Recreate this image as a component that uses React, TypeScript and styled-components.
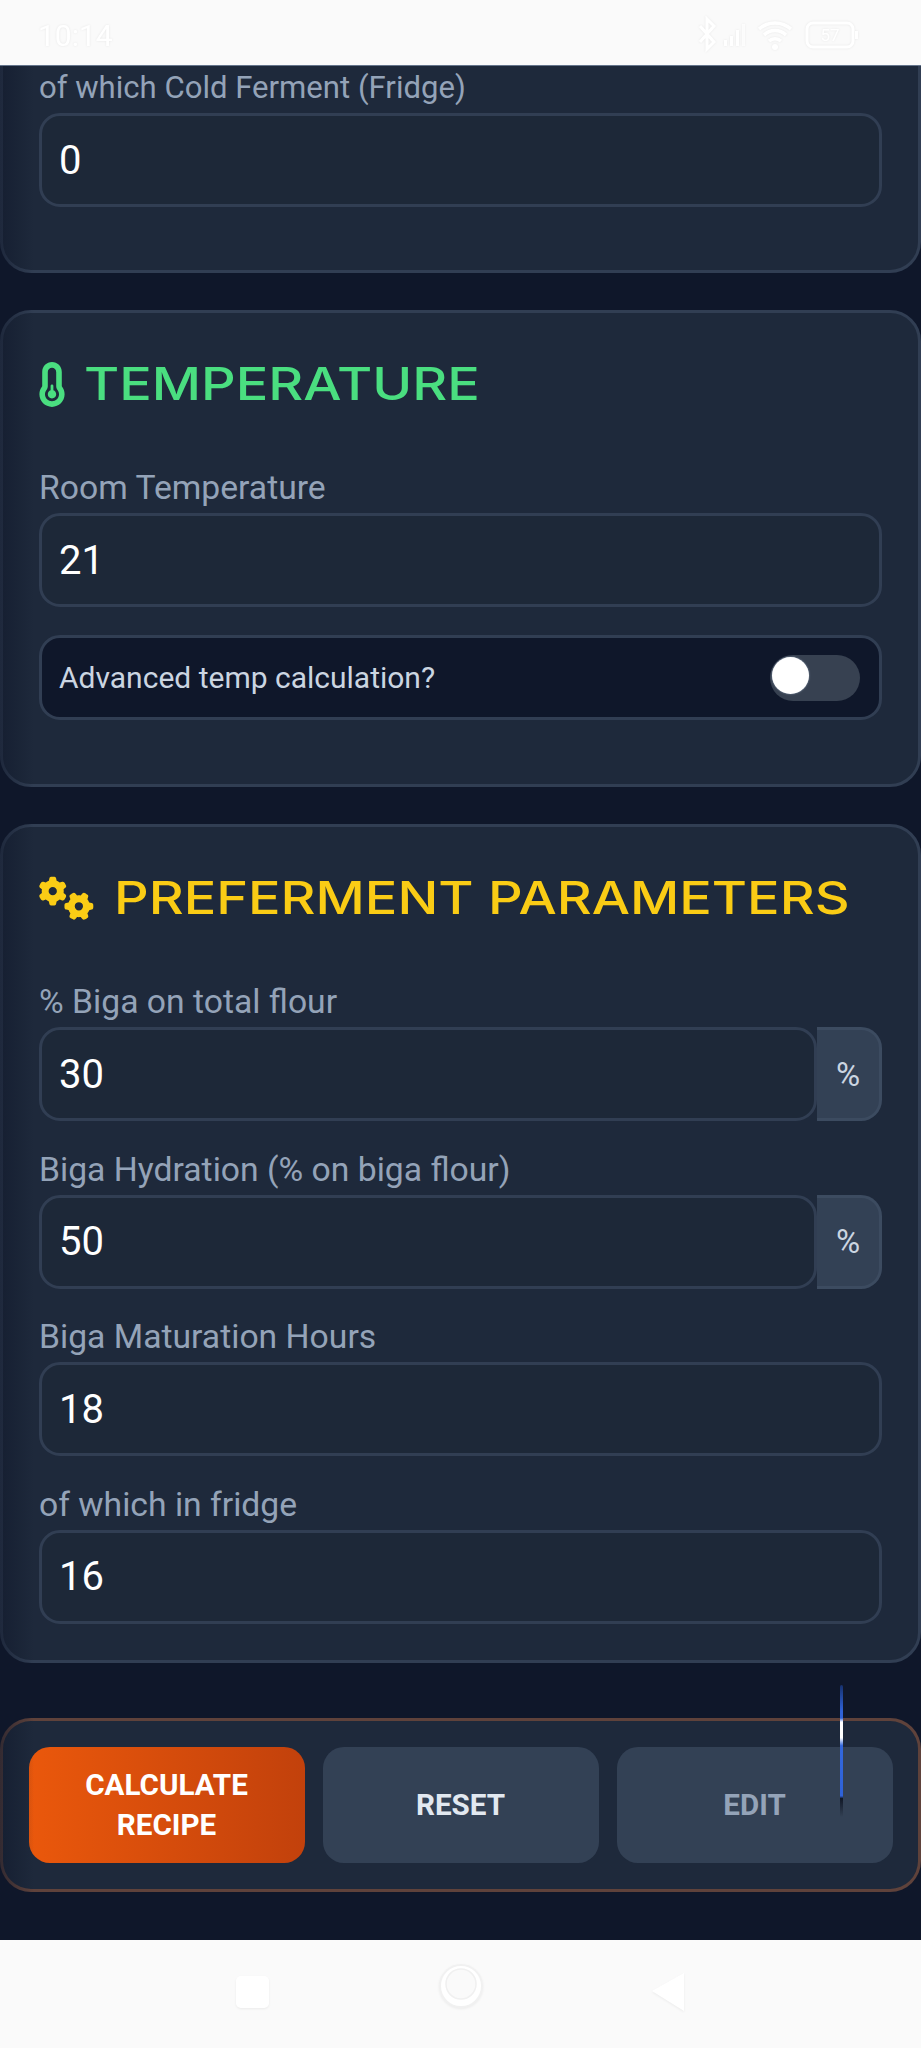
import React from "react";
import styled, { createGlobalStyle } from "styled-components";
import { FaGears, FaTemperatureQuarter } from "react-icons/fa6";

const Global = createGlobalStyle`
  html, body { margin: 0; padding: 0; background: #0f172a; }
  * { box-sizing: border-box; }
`;

const Screen = styled.div`
  position: relative;
  width: 921px;
  height: 2048px;
  overflow: hidden;
  display: flex;
  flex-direction: column;
  background: #0f172a;
  font-family: Roboto, "Liberation Sans", sans-serif;
`;

const StatusBar = styled.header`
  height: 66px;
  flex: none;
  background: #fafafa;
  border-bottom: 1px solid #64748b;
  display: flex;
  align-items: center;
  justify-content: space-between;
  padding: 6px 40px 0 38px;
  color: #ffffff;
`;

const Time = styled.span`
  font-size: 30px;
  line-height: 32px;
  filter: drop-shadow(0 0 1px rgba(0, 0, 0, 0.08));
`;

const StatusIcons = styled.svg`
  width: 184px;
  height: 40px;
  filter: drop-shadow(0 0 1px rgba(0, 0, 0, 0.08));
`;

const Main = styled.main`
  position: relative;
  flex: 1;
  min-height: 0;
  display: flex;
  flex-direction: column;
  gap: 37px;
`;

const EdgeShade = styled.div`
  position: absolute;
  inset: 0 auto 0 0;
  width: 34px;
  background: linear-gradient(90deg, rgba(15, 23, 42, 0.55), rgba(15, 23, 42, 0));
  pointer-events: none;
`;

const Card = styled.section<{ $clipped?: boolean }>`
  background: #1e293b;
  border: 3px solid #313e53;
  border-top-width: ${(p) => (p.$clipped ? 0 : 3)}px;
  border-radius: ${(p) => (p.$clipped ? "0 0 31px 31px" : "31px")};
  padding: ${(p) => (p.$clipped ? "0 36px 63px" : "36px")};
  display: flex;
  flex-direction: column;
`;

const Heading = styled.h2<{ $color: string }>`
  margin: 0 0 47px;
  height: 70px;
  display: flex;
  align-items: center;
  color: ${(p) => p.$color};
  font-family: Inter, "DejaVu Sans", sans-serif;
  font-weight: 500;
  font-size: 45px;
  line-height: 70px;
  white-space: nowrap;
  & > svg { flex: none; }
`;

const HeadingText = styled.span<{ $gap: number }>`
  display: inline-block;
  margin-left: ${(p) => p.$gap}px;
  transform: scaleX(1.2);
  transform-origin: left center;
`;

const Fields = styled.div`
  display: flex;
  flex-direction: column;
  gap: 26.67px;
`;

const Field = styled.div`
  display: flex;
  flex-direction: column;
`;

const Label = styled.label<{ $small?: boolean }>`
  height: 43px;
  margin-bottom: 4px;
  color: #94a3b8;
  font-size: ${(p) => (p.$small ? 31.1 : 33.7)}px;
  line-height: 43px;
`;

const InputRow = styled.div`
  display: flex;
`;

const Input = styled.input`
  flex: 1;
  min-width: 0;
  height: 94px;
  padding: 0 17px;
  background: #1d2838;
  border: 3px solid #313e53;
  border-radius: 21px;
  color: #ffffff;
  font-family: inherit;
  font-size: 40px;
  outline: none;
`;

const Suffix = styled.span`
  flex: none;
  width: 65px;
  height: 94px;
  display: flex;
  align-items: center;
  justify-content: center;
  background: #334155;
  border: 3px solid #3c4b60;
  border-left: 0;
  border-radius: 0 21px 21px 0;
  color: #cbd5e1;
  font-size: 33px;
`;

const ToggleRow = styled.div`
  margin-top: 28px;
  margin-bottom: 28px;
  height: 85px;
  display: flex;
  align-items: center;
  justify-content: space-between;
  padding: 0 19px 0 17px;
  background: #0f172a;
  border: 3px solid #313e53;
  border-radius: 21px;
  color: #cbd5e1;
  font-size: 30px;
`;

const Track = styled.span`
  position: relative;
  display: block;
  width: 90px;
  height: 46px;
  border-radius: 23px;
  background: #374151;
`;

const Thumb = styled.span`
  position: absolute;
  left: 2px;
  top: 2px;
  width: 37px;
  height: 37px;
  border-radius: 50%;
  background: #ffffff;
  box-shadow: 0 0 2px rgba(148, 163, 184, 0.9);
`;

const ActionBar = styled.section`
  margin-top: 18px;
  height: 174px;
  flex: none;
  display: grid;
  grid-template-columns: repeat(3, 276px);
  gap: 18px;
  align-items: center;
  justify-content: center;
  background: #1e293b;
  border: 3px solid rgba(234, 120, 60, 0.32);
  border-radius: 31px;
`;

const ActionButton = styled.button<{ $variant: "primary" | "plain" | "muted" }>`
  height: 116px;
  border: 0;
  border-radius: 21px;
  padding: 0 40px;
  font-family: inherit;
  font-size: 29.6px;
  line-height: 40px;
  font-weight: 700;
  background: ${(p) =>
    p.$variant === "primary" ? "linear-gradient(90deg, #ea580c, #c2410c)" : "#334155"};
  color: ${(p) =>
    p.$variant === "primary" ? "#ffffff" : p.$variant === "plain" ? "#e2e8f0" : "#94a3b8"};
`;

const Streak = styled.div`
  position: absolute;
  left: 839.5px;
  top: 1685px;
  width: 3px;
  height: 132px;
  border-radius: 2px;
  background: linear-gradient(
    180deg,
    rgba(37, 99, 235, 0.35) 0%,
    #2f62d8 20%,
    #2f62d8 25%,
    #ffffff 28%,
    #ffffff 40%,
    #3367dc 46%,
    #2f62d8 84%,
    #111827 86%,
    rgba(17, 24, 39, 0) 100%
  );
  pointer-events: none;
`;

const NavBar = styled.nav`
  height: 108px;
  flex: none;
  background: #fafafa;
  position: relative;
`;

const NavIcons = styled.svg`
  position: absolute;
  left: 0;
  top: 0;
  width: 921px;
  height: 108px;
  filter: drop-shadow(0 1px 1px rgba(0, 0, 0, 0.06));
`;

function Status() {
  return (
    <StatusBar>
      <Time>10:14</Time>
      <StatusIcons viewBox="0 0 184 40">
        <path d="M3 10l14 16-7 7V3l7 7L3 26" fill="none" stroke="#fff" strokeWidth="3" />
        <g fill="#fff">
          <rect x="27" y="24" width="3" height="6" />
          <rect x="33" y="20" width="3" height="10" />
          <rect x="39" y="14" width="3" height="16" />
          <rect x="45" y="8" width="3" height="22" opacity="0.7" />
        </g>
        <path d="M62 13a24 24 0 0 1 32 0M67 19a16 16 0 0 1 22 0M72 25a9 9 0 0 1 12 0" fill="none" stroke="#fff" strokeWidth="3.5" />
        <circle cx="78" cy="31" r="3" fill="#fff" />
        <rect x="110" y="7" width="46" height="24" rx="6" fill="none" stroke="#fff" strokeWidth="3" />
        <rect x="158" y="15" width="3" height="8" fill="#fff" />
        <text x="133" y="25" textAnchor="middle" fontSize="17" fontFamily="Roboto" fill="#fff">57</text>
      </StatusIcons>
    </StatusBar>
  );
}

function NumberField({ label, value, suffix, small }: { label: string; value: string; suffix?: string; small?: boolean }) {
  return (
    <Field>
      <Label $small={small}>{label}</Label>
      <InputRow>
        <Input readOnly value={value} />
        {suffix && <Suffix>{suffix}</Suffix>}
      </InputRow>
    </Field>
  );
}

export default function App() {
  return (
    <Screen>
      <Global />
      <Status />
      <Main>
        <Card $clipped>
          <NumberField small label="of which Cold Ferment (Fridge)" value="0" />
        </Card>
        <Card>
          <Heading $color="#4ade80">
            <FaTemperatureQuarter size={45} style={{ width: 28, marginLeft: -1 }} />
            <HeadingText $gap={18}>TEMPERATURE</HeadingText>
          </Heading>
          <NumberField label="Room Temperature" value="21" />
          <ToggleRow>
            <span>Advanced temp calculation?</span>
            <Track><Thumb /></Track>
          </ToggleRow>
        </Card>
        <Card>
          <Heading $color="#facc15">
            <FaGears size={44} style={{ width: 55 }} />
            <HeadingText $gap={20}>PREFERMENT PARAMETERS</HeadingText>
          </Heading>
          <Fields>
            <NumberField label="% Biga on total flour" value="30" suffix="%" />
            <NumberField label="Biga Hydration (% on biga flour)" value="50" suffix="%" />
            <NumberField label="Biga Maturation Hours" value="18" />
            <NumberField label="of which in fridge" value="16" />
          </Fields>
        </Card>
        <ActionBar>
          <ActionButton $variant="primary">CALCULATE RECIPE</ActionButton>
          <ActionButton $variant="plain">RESET</ActionButton>
          <ActionButton $variant="muted">EDIT</ActionButton>
        </ActionBar>
        <EdgeShade />
      </Main>
      <NavBar>
        <NavIcons viewBox="0 0 921 108">
          <rect x="236" y="36" width="33" height="32" rx="5" fill="#fff" />
          <circle cx="461" cy="46" r="21" fill="#fff" stroke="#f1f1f1" strokeWidth="2" />
          <circle cx="461" cy="44" r="15" fill="#fafafa" stroke="#f0f0f0" strokeWidth="1.5" />
          <path d="M684 33v38l-32-20z" fill="#fff" />
        </NavIcons>
      </NavBar>
      <Streak />
    </Screen>
  );
}
